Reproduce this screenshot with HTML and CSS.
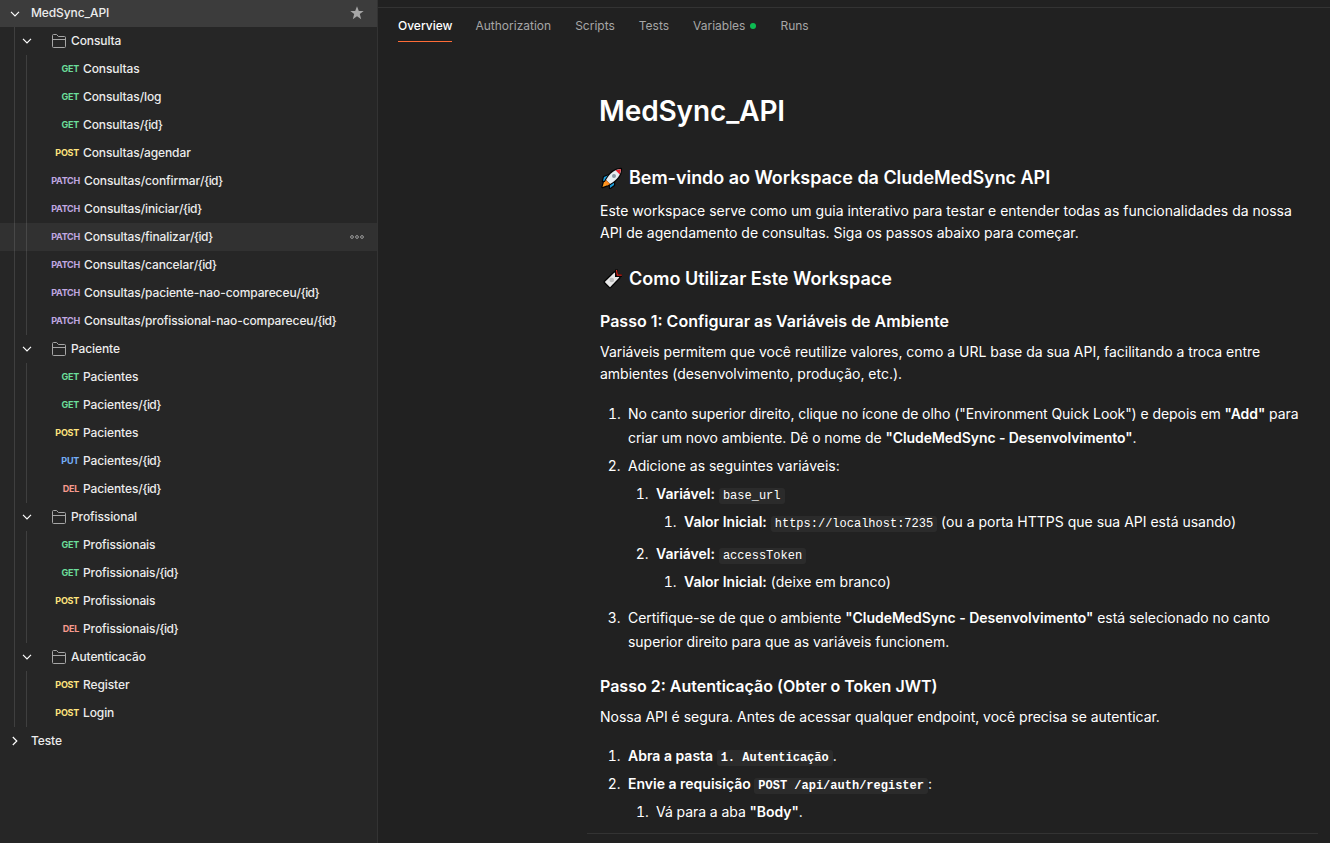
FILE: index.html
```html
<!DOCTYPE html>
<html lang="pt-BR">
<head>
<meta charset="utf-8">
<title>MedSync_API</title>
<link rel="stylesheet" href="styles.css">
</head>
<body>
<svg width="0" height="0" class="defs">
  <symbol id="chev" viewBox="0 0 10 6"><path d="M1 .8 5 4.8 9 .8" fill="none" stroke="currentColor" stroke-width="1.2"/></symbol>
  <symbol id="folder" viewBox="0 0 14 14"><path d="M.5 12.5V1.5q0-1 1-1H4.6L6.4 2.500H12.500q1 0 1 1V12.500q0 1-1 1H1.500q-1 0-1-1ZM.5 5.500H13.500" fill="none" stroke="currentColor"/></symbol>
</svg>
<div class="app">
  <nav class="sidebar">
    <div class="root"><svg class="chev"><use href="#chev"/></svg><span class="root-name">MedSync_API</span>
      <svg class="star" viewBox="0 0 14 14"><path d="M7 .3 8.800 5H13.700L9.800 8.100 11.200 13.300 7 10.300 2.800 13.300 4.200 8.100.3 5H5.200Z" fill="currentColor"/></svg></div>
    <div class="tree">
      <div class="folder"><svg class="chev"><use href="#chev"/></svg><svg class="ficon"><use href="#folder"/></svg><span>Consulta</span></div>
      <div class="group">
        <div class="req"><b class="m get">GET</b><span>Consultas</span></div>
        <div class="req"><b class="m get">GET</b><span>Consultas/log</span></div>
        <div class="req"><b class="m get">GET</b><span>Consultas<i>/{id}</i></span></div>
        <div class="req"><b class="m post">POST</b><span>Consultas/agendar</span></div>
        <div class="req"><b class="m patch">PATCH</b><span>Consultas/confirmar<i>/{id}</i></span></div>
        <div class="req"><b class="m patch">PATCH</b><span>Consultas/iniciar<i>/{id}</i></span></div>
        <div class="req active"><b class="m patch">PATCH</b><span>Consultas/finalizar<i>/{id}</i></span>
          <svg class="dots" viewBox="0 0 14 4"><g fill="none" stroke="currentColor" stroke-width=".9"><circle cx="2" cy="2" r="1.400"/><circle cx="7" cy="2" r="1.400"/><circle cx="12" cy="2" r="1.400"/></g></svg></div>
        <div class="req"><b class="m patch">PATCH</b><span>Consultas/cancelar<i>/{id}</i></span></div>
        <div class="req"><b class="m patch">PATCH</b><span>Consultas/paciente-nao-compareceu<i>/{id}</i></span></div>
        <div class="req"><b class="m patch">PATCH</b><span>Consultas/profissional-nao-compareceu<i>/{id}</i></span></div>
      </div>
      <div class="folder"><svg class="chev"><use href="#chev"/></svg><svg class="ficon"><use href="#folder"/></svg><span>Paciente</span></div>
      <div class="group">
        <div class="req"><b class="m get">GET</b><span>Pacientes</span></div>
        <div class="req"><b class="m get">GET</b><span>Pacientes<i>/{id}</i></span></div>
        <div class="req"><b class="m post">POST</b><span>Pacientes</span></div>
        <div class="req"><b class="m put">PUT</b><span>Pacientes<i>/{id}</i></span></div>
        <div class="req"><b class="m del">DEL</b><span>Pacientes<i>/{id}</i></span></div>
      </div>
      <div class="folder"><svg class="chev"><use href="#chev"/></svg><svg class="ficon"><use href="#folder"/></svg><span>Profissional</span></div>
      <div class="group">
        <div class="req"><b class="m get">GET</b><span>Profissionais</span></div>
        <div class="req"><b class="m get">GET</b><span>Profissionais<i>/{id}</i></span></div>
        <div class="req"><b class="m post">POST</b><span>Profissionais</span></div>
        <div class="req"><b class="m del">DEL</b><span>Profissionais<i>/{id}</i></span></div>
      </div>
      <div class="folder"><svg class="chev"><use href="#chev"/></svg><svg class="ficon"><use href="#folder"/></svg><span>Autenticacão</span></div>
      <div class="group">
        <div class="req"><b class="m post">POST</b><span>Register</span></div>
        <div class="req"><b class="m post">POST</b><span>Login</span></div>
      </div>
    </div>
    <div class="root closed"><svg class="chev right"><use href="#chev"/></svg><span class="root-name">Teste</span></div>
  </nav>
  <main class="main">
    <div class="tabs">
      <span class="tab on">Overview</span><span class="tab">Authorization</span><span class="tab">Scripts</span><span class="tab">Tests</span><span class="tab">Variables<i class="dot"></i></span><span class="tab">Runs</span>
    </div>
    <article class="doc">
      <h1>MedSync_API</h1>
      <h2 class="first"><svg class="emoji" viewBox="0 0 22 22"><g stroke="#050505" stroke-width="2.400" stroke-linejoin="round" paint-order="stroke"><path d="M8 8 3 10 2 14 7 13ZM13 13 13 18 9 21 9 15Z" fill="#1d9bd8"/><path d="M3 15 1.500 20 7 18 6 15Z" fill="#ff9a1f"/><path d="M20 2C14 2 9 6 5 13L9 17C16 13 20 8 20 2Z" fill="#e8edf1"/></g><path d="M20 2 14.500 3.200 18.800 7.500Z" fill="#e8202c"/><circle cx="13" cy="9" r="2" fill="#8a98a4"/><path d="M5 13 3.500 15.500 6.500 18.500 9 17Z" fill="#ff8a1c"/></svg><span>Bem-vindo ao Workspace da CludeMedSync API</span></h2>
      <p>Este workspace serve como um guia interativo para testar e entender todas as funcionalidades da nossa<br><span class="snug">API de agendamento de consultas. Siga os passos abaixo para começar.</span></p>
      <h2 class="second"><svg class="emoji" viewBox="0 0 22 22"><path d="M13.500 4.500 18.300 9.500 9 19.200 3.800 14Z" fill="#e9e9e9" stroke="#050505" stroke-width="2.600" stroke-linejoin="round" paint-order="stroke"/><circle cx="10.800" cy="12" r="2.300" fill="#bdbdbd"/><path d="M15.500 1.500V7.500H21" fill="none" stroke="#050505" stroke-width="3"/><path d="M15.500 2 16.300 7.200H20.800" fill="none" stroke="#d8261c" stroke-width="1.200"/></svg><span>Como Utilizar Este Workspace</span></h2>
      <h3>Passo 1: Configurar as Variáveis de Ambiente</h3>
      <p class="snug">Variáveis permitem que você reutilize valores, como a URL base da sua API, facilitando a troca entre<br>ambientes (desenvolvimento, produção, etc.).</p>
      <ol class="top">
        <li class="tight">No canto superior direito, clique no ícone de olho ("Environment Quick Look") e depois em <b>"Add"</b> para<br>criar um novo ambiente. Dê o nome de <b>"CludeMedSync - Desenvolvimento"</b>.</li>
        <li>Adicione as seguintes variáveis:
          <ol>
            <li><b>Variável:</b> <code>base_url</code>
              <ol><li><b>Valor Inicial:</b> <code>https://localhost:7235</code> (ou a porta HTTPS que sua API está usando)</li></ol></li>
            <li class="spaced"><b>Variável:</b> <code>accessToken</code>
              <ol><li><b>Valor Inicial:</b> (deixe em branco)</li></ol></li>
          </ol></li>
        <li class="last">Certifique-se de que o ambiente <b>"CludeMedSync - Desenvolvimento"</b> está selecionado no canto<br>superior direito para que as variáveis funcionem.</li>
      </ol>
      <h3 class="step2">Passo 2: Autenticação (Obter o Token JWT)</h3>
      <p class="snug">Nossa API é segura. Antes de acessar qualquer endpoint, você precisa se autenticar.</p>
      <ol class="top steps">
        <li><b>Abra a pasta <code>1. Autenticação</code></b>.</li>
        <li><b>Envie a requisição <code>POST /api/auth/register</code></b>:
          <ol><li class="tight">Vá para a aba <b>"Body"</b>.</li></ol></li>
      </ol>
      <hr>
    </article>
  </main>
</div>
</body>
</html>
```
FILE: styles.css
```css
@counter-style spaced-decimal { system: extends decimal; suffix: ".\a0\a0"; }

* { box-sizing: border-box; }
body { margin: 0; background: #212121; color: #fff; font-family: Inter, "Liberation Sans", sans-serif; }
.defs { position: absolute; }
svg { flex: none; }
.app { display: flex; width: 1330px; height: 843px; overflow: hidden; }

.sidebar { width: 378px; flex: none; background: #262626; border-right: 1px solid #333; font-size: 12px; font-weight: 500; letter-spacing: -.1px; color: #ececec; white-space: nowrap; }
.sidebar span { padding-bottom: 2px; }
.sidebar i { font-style: normal; letter-spacing: -.55px; }
.root { display: flex; align-items: center; height: 27px; padding: 0 13px 0 10px; background: #3c3c3c; }
.root.closed { height: 28px; background: none; }
.chev { width: 10px; height: 6px; color: #fff; }
.chev.right { transform: rotate(-90deg); }
.root-name { margin-left: 11px; flex: 1; }
.star { width: 14px; height: 14px; margin-bottom: 1px; color: #a6a6a6; }
.tree { background: linear-gradient(#3f3f3f, #3f3f3f) 14px 0 / 1px 100% no-repeat; }
.folder { display: flex; align-items: center; height: 28px; padding-left: 22px; }
.ficon { width: 14px; height: 14px; margin: 0 5px 0 20px; color: #a6a6a6; }
.group { background: linear-gradient(#3f3f3f, #3f3f3f) 26px 0 / 1px 100% no-repeat; }
.req { display: flex; align-items: center; height: 28px; padding: 0 13px 0 45px; }
.req.active { background: rgba(255, 255, 255, .05); }
.m { min-width: 34px; margin-right: 4px; padding-bottom: 1px; text-align: right; font-size: 9px; font-weight: 700; letter-spacing: -.25px; }
.get { color: #6bdd9a; }
.post { color: #ffe47e; }
.patch { margin-left: 1px; color: #c0a8e1; }
.put { color: #74aef6; }
.del { color: #f79a8e; }
.dots { width: 14px; height: 4px; margin-left: auto; color: #a6a6a6; }

.main { flex: 1; padding-top: 7px; }
.tabs { display: flex; gap: 24px; height: 43px; padding-left: 20px; border-top: 1px solid #333; font-size: 12px; color: #a6a6a6; }
.tab { display: flex; align-items: center; height: 34px; padding-top: 2px; border-bottom: 1px solid transparent; }
.tab.on { margin-right: -1px; color: #fff; font-weight: 500; border-color: #ff6c37; }
.dot { width: 6px; height: 6px; margin-left: 5px; border-radius: 50%; background: #0cbb52; }

.doc { padding-left: 222px; font-size: 14px; line-height: 22px; white-space: nowrap; }
h1 { margin: 41px 0 0 -1px; font-size: 28px; line-height: 40px; font-weight: 600; letter-spacing: -.12px; }
h2 { display: flex; align-items: center; margin: 34px 0 9px; font-size: 18px; line-height: 26px; font-weight: 600; }
h2.first { letter-spacing: -.04px; }
h2.second { margin: 22px 0 18px; }
.emoji { width: 22px; height: 22px; margin: 0 6px 0 1px; }
h3 { margin: 0 0 9px; font-size: 16px; line-height: 22px; font-weight: 600; }
p { margin: 0; }
b { font-weight: 600; }
.snug { letter-spacing: -.022px; }
.tight { letter-spacing: -.07px; }
ol { margin: 0; padding-left: 28px; line-height: 24px; list-style: spaced-decimal; }
ol.top { margin-top: 17px; }
ol.steps { margin-top: 16px; }
li { margin-top: 4px; }
ol.top > li:first-child { margin-top: 0; }
li.spaced { margin-top: 8px; }
li.last { margin-top: 12px; letter-spacing: -.035px; }
code { padding: 1px 4px; border-radius: 3px; background: #2b2b2b; font: 12px/14px "Liberation Mono", monospace; letter-spacing: 0; }
b code { font-weight: 700; }
.step2 { margin-top: 21px; }
hr { width: 731px; margin: 9px 0 0 -13px; border: 0; border-top: 1px solid #333; }
```
